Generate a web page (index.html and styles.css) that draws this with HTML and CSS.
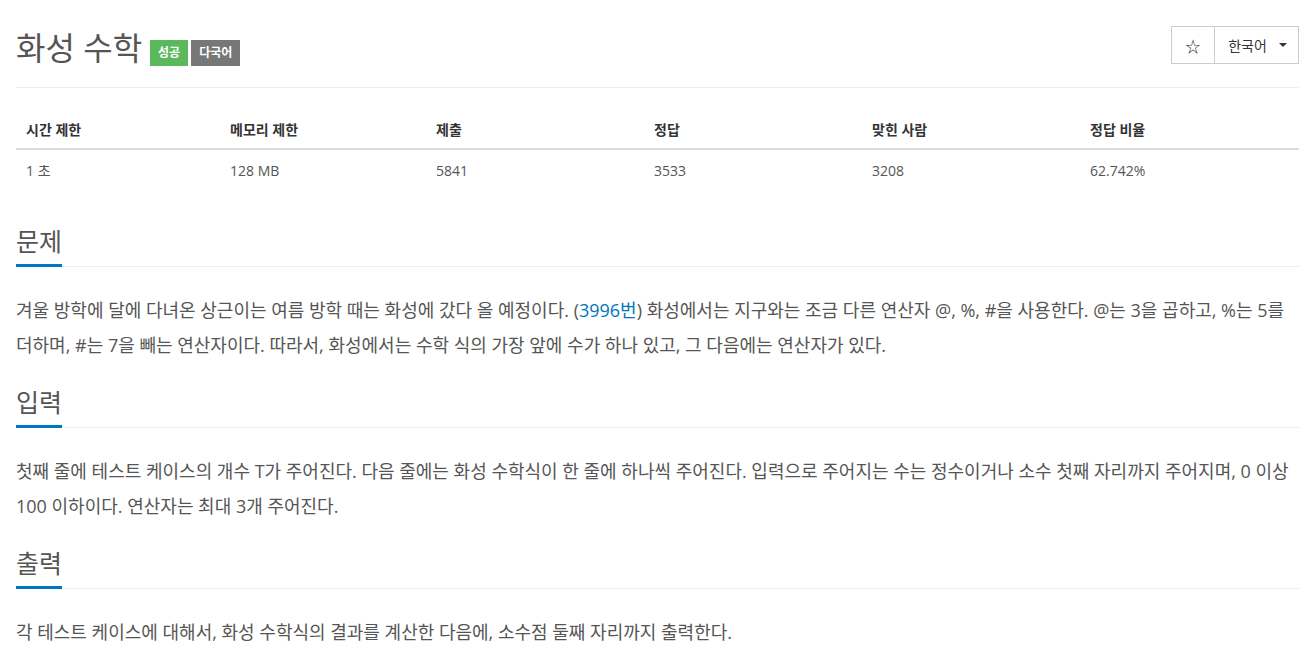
FILE: index.html
```html
<!DOCTYPE html>
<html lang="ko">
<head>
    <meta charset="UTF-8">
    <meta name="viewport" content="width=device-width, initial-scale=1.0">
    <title>화성 수학</title>
    <link rel="stylesheet" href="styles.css">
</head>
<body>
    <div class="page">
        <div class="page-header">
            <h1 class="title">
                <span>화성 수학</span>
                <span class="badge badge-success">성공</span>
                <span class="badge badge-gray">다국어</span>
            </h1>
            <div class="btn-group">
                <button class="btn btn-star">☆</button>
                <button class="btn btn-lang">한국어 <span class="caret"></span></button>
            </div>
        </div>

        <table class="info-table">
            <thead>
                <tr>
                    <th class="col1">시간 제한</th>
                    <th class="col2">메모리 제한</th>
                    <th class="col3">제출</th>
                    <th class="col4">정답</th>
                    <th class="col5">맞힌 사람</th>
                    <th>정답 비율</th>
                </tr>
            </thead>
            <tbody>
                <tr>
                    <td>1 초</td>
                    <td>128 MB</td>
                    <td>5841</td>
                    <td>3533</td>
                    <td>3208</td>
                    <td>62.742%</td>
                </tr>
            </tbody>
        </table>

        <section class="problem-section">
            <div class="headline"><h2>문제</h2></div>
            <p class="problem-text">겨울 방학에 달에 다녀온 상근이는 여름 방학 때는 화성에 갔다 올 예정이다. (<a href="#">3996번</a>) 화성에서는 지구와는 조금 다른 연산자 @, %, #을 사용한다. @는 3을 곱하고, %는 5를 더하며, #는 7을 빼는 연산자이다. 따라서, 화성에서는 수학 식의 가장 앞에 수가 하나 있고, 그 다음에는 연산자가 있다.</p>
        </section>

        <section class="problem-section">
            <div class="headline"><h2>입력</h2></div>
            <p class="problem-text">첫째 줄에 테스트 케이스의 개수 T가 주어진다. 다음 줄에는 화성 수학식이 한 줄에 하나씩 주어진다. 입력으로 주어지는 수는 정수이거나 소수 첫째 자리까지 주어지며, 0 이상 100 이하이다. 연산자는 최대 3개 주어진다.</p>
        </section>

        <section class="problem-section">
            <div class="headline"><h2>출력</h2></div>
            <p class="problem-text">각 테스트 케이스에 대해서, 화성 수학식의 결과를 계산한 다음에, 소수점 둘째 자리까지 출력한다.</p>
        </section>
    </div>
</body>
</html>
```

FILE: styles.css
```css
* {
    margin: 0;
    padding: 0;
    box-sizing: border-box;
}

body {
    font-family: "Open Sans", "Noto Sans CJK KR", sans-serif;
    color: #555;
    background-color: #fff;
}

.page {
    margin: 0 14px 0 16px;
}

.page-header {
    display: flex;
    justify-content: space-between;
    align-items: flex-start;
    padding-top: 26px;
    height: 88px;
    border-bottom: 1px solid #eee;
}

.title {
    font-size: 32px;
    font-weight: 400;
    line-height: 44px;
    color: #555;
    display: flex;
    align-items: flex-end;
}

.badge {
    display: inline-block;
    font-size: 12px;
    font-weight: bold;
    line-height: 26px;
    height: 26px;
    color: #fff;
    padding: 0 8px;
    margin-bottom: 4px;
}

.badge-success {
    background-color: #5cb85c;
    margin-left: 8px;
}

.badge-gray {
    background-color: #777;
    margin-left: 3px;
}

.btn-group {
    display: flex;
    height: 38px;
    border: 1px solid #ccc;
}

.btn {
    background: #fff;
    border: none;
    font-family: inherit;
    font-size: 14px;
    color: #333;
    height: 36px;
}

.btn-star {
    width: 43px;
    border-right: 1px solid #ccc;
    font-size: 15px;
}

.btn-lang {
    width: 83px;
    padding-left: 2px;
    display: flex;
    align-items: center;
    justify-content: center;
    gap: 12px;
}

.caret {
    display: inline-block;
    width: 0;
    height: 0;
    border-top: 4px solid #333;
    border-left: 4px solid transparent;
    border-right: 4px solid transparent;
}

.info-table {
    width: 100%;
    border-collapse: collapse;
    margin-top: 24px;
    margin-bottom: 34px;
    font-size: 14px;
}

.info-table th,
.info-table td {
    text-align: left;
    padding: 8px 10px;
    line-height: 20px;
}

.info-table th {
    color: #333;
    font-weight: bold;
    border-bottom: 2px solid #ddd;
}

.info-table td {
    color: #555;
    padding-top: 11px;
    padding-bottom: 6px;
}

.col1 { width: 204px; }
.col2 { width: 206px; }
.col3 { width: 218px; }
.col4 { width: 218px; }
.col5 { width: 218px; }

.problem-section {
    margin-top: 19px;
}

.headline {
    border-bottom: 1px dotted #e0e0e0;
    margin-bottom: 26px;
}

.headline h2 {
    display: inline-block;
    font-size: 25px;
    font-weight: 400;
    color: #555;
    line-height: 40px;
    padding-bottom: 3px;
    border-bottom: 3px solid #0076c0;
    margin-bottom: -1px;
}

.problem-text {
    font-size: 18px;
    line-height: 35px;
    color: #555;
    word-break: keep-all;
}

.problem-text a {
    color: #0076c0;
    text-decoration: none;
}
```
